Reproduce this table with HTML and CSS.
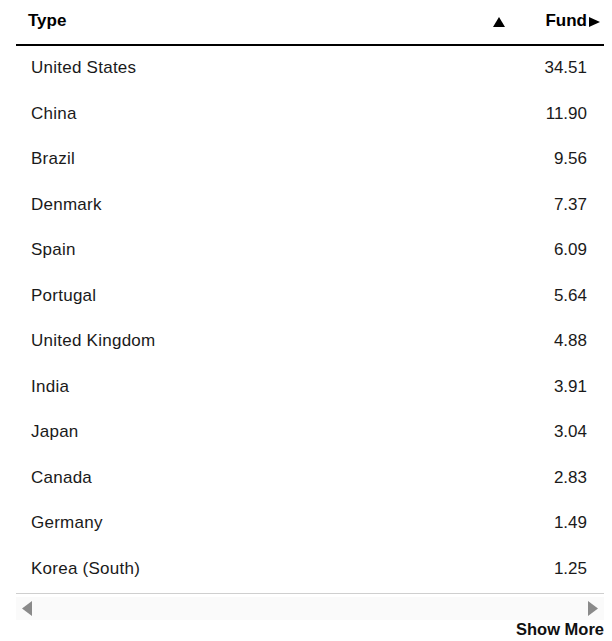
FILE: index.html
```html
<!DOCTYPE html>
<html>
<head>
<meta charset="utf-8">
<link rel="stylesheet" href="styles.css">
</head>
<body>
<div class="wrap">
  <div class="table">
    <div class="head">
      <span class="h-type">Type</span>
      <span class="h-sort"><svg width="12" height="10" viewBox="0 0 12 10"><polygon points="6,0 12,10 0,10" fill="#000"/></svg></span>
      <span class="h-fund">Fund<svg width="11" height="10" viewBox="0 0 11 10"><polygon points="0,0 11,5 0,10" fill="#000"/></svg></span>
    </div>
    <div class="row"><span>United States</span><span class="num">34.51</span></div>
    <div class="row"><span>China</span><span class="num">11.90</span></div>
    <div class="row"><span>Brazil</span><span class="num">9.56</span></div>
    <div class="row"><span>Denmark</span><span class="num">7.37</span></div>
    <div class="row"><span>Spain</span><span class="num">6.09</span></div>
    <div class="row"><span>Portugal</span><span class="num">5.64</span></div>
    <div class="row"><span>United Kingdom</span><span class="num">4.88</span></div>
    <div class="row"><span>India</span><span class="num">3.91</span></div>
    <div class="row"><span>Japan</span><span class="num">3.04</span></div>
    <div class="row"><span>Canada</span><span class="num">2.83</span></div>
    <div class="row"><span>Germany</span><span class="num">1.49</span></div>
    <div class="row"><span>Korea (South)</span><span class="num">1.25</span></div>
    <div class="scroll">
      <svg width="10" height="15" viewBox="0 0 10 15"><polygon points="10,0 10,15 0,7.5" fill="#8a8a8a"/></svg>
      <svg width="10" height="15" viewBox="0 0 10 15"><polygon points="0,0 10,7.5 0,15" fill="#8a8a8a"/></svg>
    </div>
  </div>
  <div class="more">Show More</div>
</div>
</body>
</html>
```
FILE: styles.css
```css
* { box-sizing: border-box; }
body {
  margin: 0;
  background: #fff;
  font-family: "Liberation Sans", Arial, sans-serif;
  color: #111;
}
.wrap {
  padding-left: 16px;
  width: 604px;
}
.table {
  display: flex;
  flex-direction: column;
}
.head {
  height: 46px;
  border-bottom: 2px solid #000;
  display: flex;
  align-items: center;
  padding: 0 4px 3px 12px;
  font-weight: 700;
  font-size: 17px;
  color: #000;
}
.h-type { flex: 1; }
.h-sort { display: flex; width: 52px; padding-top: 3px; }
.h-fund { display: flex; align-items: center; gap: 2px; }
.h-fund svg { margin-top: 2px; }
.row {
  height: 45.5px;
  display: flex;
  align-items: center;
  justify-content: space-between;
  padding: 0 16px 1px 15px;
  font-size: 17px;
  letter-spacing: 0.25px;
  color: #1a1a1a;
}
.num { letter-spacing: 0; margin-right: 1px; }
.scroll {
  margin-top: 1px;
  border-top: 1px solid #cfcfcf;
  height: 27px;
  display: flex;
  align-items: center;
  justify-content: space-between;
  padding: 3px 6px 0 6px;
  background: linear-gradient(#fff 0 3px, #fafafa 3px);
}
.more {
  text-align: right;
  font-weight: 700;
  font-size: 16.5px;
  color: #111;
  line-height: 19px;
}
```
